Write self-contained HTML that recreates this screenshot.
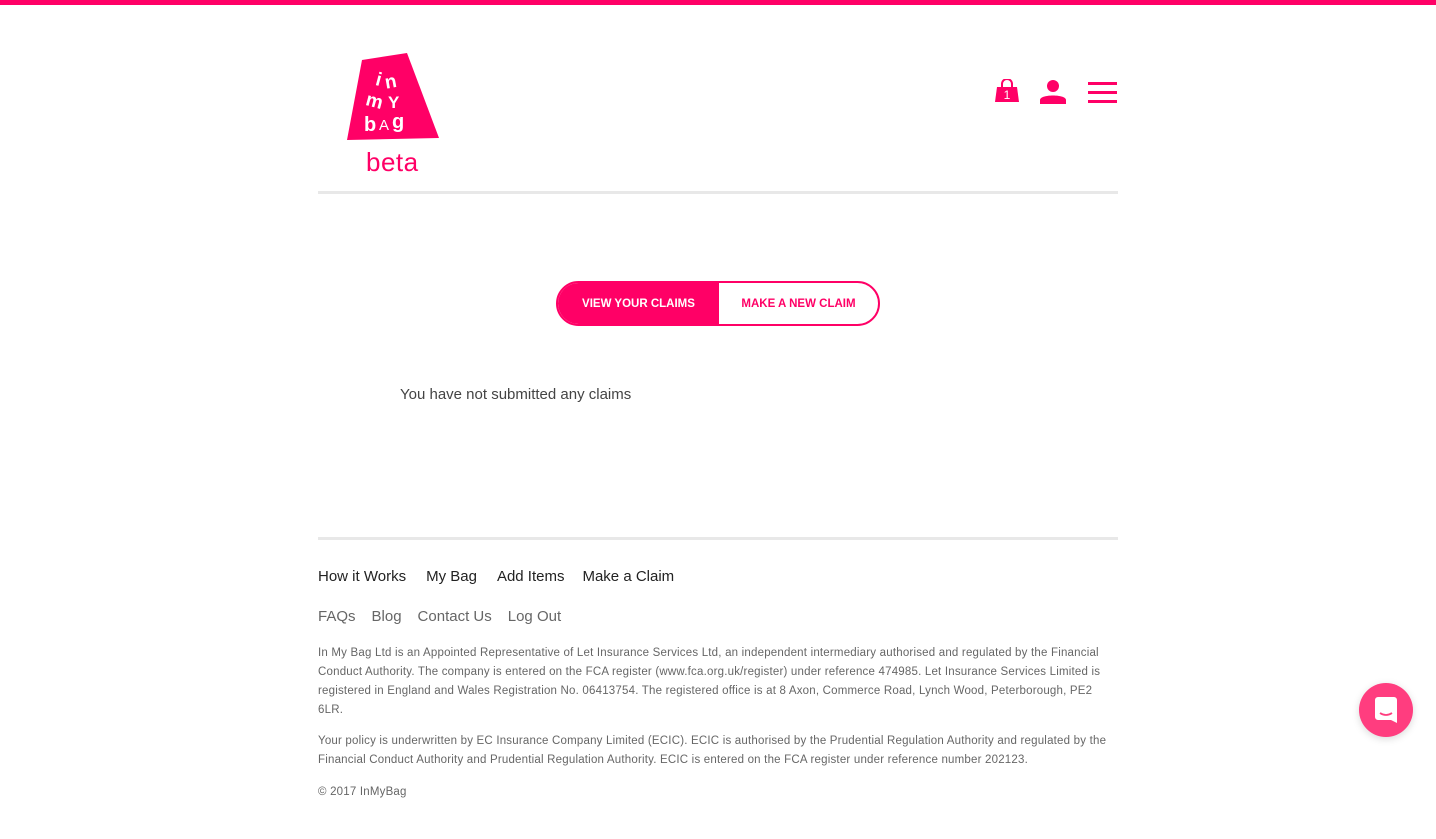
<!DOCTYPE html>
<html><head><meta charset="utf-8"><style>
*{margin:0;padding:0;box-sizing:border-box}
body{width:1436px;height:839px;background:#fff;font-family:"Liberation Sans",sans-serif;position:relative;overflow:hidden;color:#333}
.top{position:absolute;top:0;left:0;width:1436px;height:5px;background:#ff0066}
.hr{position:absolute;left:318px;width:800px;height:3px;background:#e8e8e8}
.abs{position:absolute}
.btns{position:absolute;left:556px;top:281px;width:324px;height:45px;border:2px solid #ff0066;border-radius:23px;overflow:hidden;display:flex}
.btns div{display:flex;align-items:center;justify-content:center;font-size:11.5px;font-weight:bold}
.nav1 span{margin-right:20px;font-size:15px;color:#222}
.nav2 span{margin-right:16px;font-size:15px;color:#666}
.small{font-size:11.5px;color:#666;line-height:19px;width:800px;letter-spacing:0.2px}
</style></head><body>
<div class="top"></div>
<svg class="abs" style="left:330px;top:45px" width="120" height="140">
<polygon points="32,15 77,8 109,93 17,95" fill="#ff0066"/>
<g fill="#fff" font-family="Liberation Sans" font-weight="bold">
<text x="46" y="41" font-size="19" transform="rotate(15 50 35)">i</text>
<text x="55" y="43" font-size="19" transform="rotate(-10 60 38)">n</text>
<text x="36" y="62" font-size="19" transform="rotate(15 44 56)">m</text>
<text x="58" y="63" font-size="17">Y</text>
<text x="34" y="86" font-size="20">b</text>
<text x="49" y="85" font-size="15" font-weight="normal">A</text>
<text x="62" y="83" font-size="20">g</text>
</g>
</svg>
<div class="abs" style="left:366px;top:147px;font-size:26px;color:#ff0066;letter-spacing:0.5px">beta</div>
<svg class="abs" style="left:994px;top:79px" width="26" height="24"><path d="M8 8 V5 a5 5 0 0 1 10 0 V8" stroke="#ff0066" stroke-width="2" fill="none"/><path d="M3 8 H23 L25 23 H1 Z" fill="#ff0066"/><text x="13" y="20" fill="#fff" font-size="12" text-anchor="middle" font-family="Liberation Sans">1</text></svg>
<svg class="abs" style="left:1039px;top:79px" width="28" height="25"><circle cx="14" cy="7" r="6" fill="#ff0066"/><path d="M1 25 V21 C1 15 27 15 27 21 V25 Z" fill="#ff0066"/></svg>
<svg class="abs" style="left:1088px;top:82px" width="29" height="22"><rect y="0" width="29" height="3" fill="#ff0066"/><rect y="9" width="29" height="3" fill="#ff0066"/><rect y="18" width="29" height="3" fill="#ff0066"/></svg>
<div class="hr" style="top:191px"></div>
<div class="btns"><div style="width:161px;background:#ff0066;color:#fff">VIEW YOUR CLAIMS</div><div style="flex:1;color:#ff0066">MAKE A NEW CLAIM</div></div>
<div class="abs" style="left:400px;top:386px;font-size:15px;color:#444">You have not submitted any claims</div>
<div class="hr" style="top:537px"></div>
<div class="abs nav1" style="left:318px;top:568px"><span>How it Works</span><span>My Bag</span><span style="margin-right:18px">Add Items</span><span>Make a Claim</span></div>
<div class="abs nav2" style="left:318px;top:608px"><span>FAQs</span><span>Blog</span><span>Contact Us</span><span>Log Out</span></div>
<div class="abs small" style="left:318px;top:644px">In My Bag Ltd is an Appointed Representative of Let Insurance Services Ltd, an independent intermediary authorised and regulated by the Financial Conduct Authority. The company is entered on the FCA register (www.fca.org.uk/register) under reference 474985. Let Insurance Services Limited is registered in England and Wales Registration No. 06413754. The registered office is at 8 Axon, Commerce Road, Lynch Wood, Peterborough, PE2 6LR.</div>
<div class="abs small" style="left:318px;top:732px">Your policy is underwritten by EC Insurance Company Limited (ECIC). ECIC is authorised by the Prudential Regulation Authority and regulated by the Financial Conduct Authority and Prudential Regulation Authority. ECIC is entered on the FCA register under reference number 202123.</div>
<div class="abs small" style="left:318px;top:783px">© 2017 InMyBag</div>
<div class="abs" style="left:1359px;top:683px;width:54px;height:54px;border-radius:50%;background:#ff3d7f;box-shadow:0 2px 8px rgba(0,0,0,.15)">
<svg width="54" height="54"><path d="M16 17 a3 3 0 0 1 3-3 H35 a3 3 0 0 1 3 3 V40 L32 37 H19 a3 3 0 0 1-3-3 Z" fill="#fff"/><path d="M21 30 Q27 34 33 30" stroke="#ff3d7f" stroke-width="1.8" fill="none"/></svg></div>
</body></html>
